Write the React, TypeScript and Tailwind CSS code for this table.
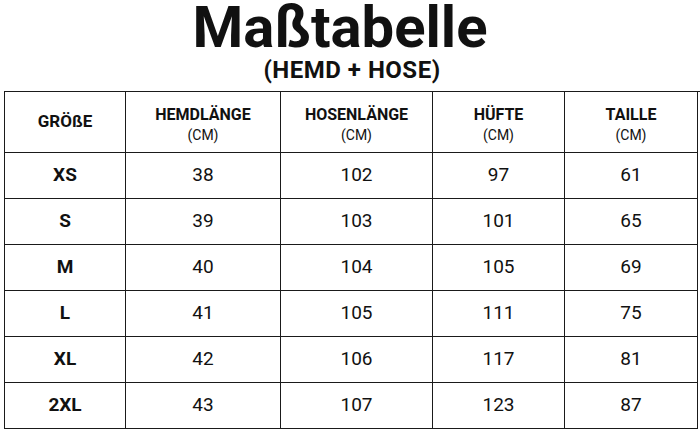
const rows = [
  { size: 'XS', hemd: 38, hose: 102, huefte: 97, taille: 61 },
  { size: 'S', hemd: 39, hose: 103, huefte: 101, taille: 65 },
  { size: 'M', hemd: 40, hose: 104, huefte: 105, taille: 69 },
  { size: 'L', hemd: 41, hose: 105, huefte: 111, taille: 75 },
  { size: 'XL', hemd: 42, hose: 106, huefte: 117, taille: 81 },
  { size: '2XL', hemd: 43, hose: 107, huefte: 123, taille: 87 },
]

const headers = ['HEMDLÄNGE', 'HOSENLÄNGE', 'HÜFTE', 'TAILLE']

export default function App() {
  return (
    <div className="w-[700px] h-[429px] bg-white text-[#111] overflow-hidden font-['Roboto',sans-serif]">
      {/* Title */}
      <div className="h-[91px] flex flex-col items-center">
        <h1 className="text-[58px] font-bold leading-[52px] mt-[1px] pr-[20px]">Maßtabelle</h1>
        <h2 className="text-[24px] font-bold leading-[24px] mt-[5px] pl-[4px] tracking-[0.5px]">(HEMD + HOSE)</h2>
      </div>

      {/* Table */}
      <div className="ml-[4px] grid grid-cols-[121px_155px_152px_132px_133px] border-l-[1.5px] border-t-[1.5px] border-[#1a1a1a]">
        <div className="h-[61px] flex items-center justify-center border-r-[1.5px] border-b-[1.5px] border-[#1a1a1a] font-bold text-[17px]">
          GRÖßE
        </div>
        {headers.map((h) => (
          <div
            key={h}
            className="h-[61px] flex flex-col items-center justify-center pt-[5px] border-r-[1.5px] border-b-[1.5px] border-[#1a1a1a]"
          >
            <span className="font-bold text-[16px] leading-[20px]">{h}</span>
            <span className="text-[14px] leading-[20px]">(CM)</span>
          </div>
        ))}
        {rows.map((r) => (
          <div key={r.size} className="contents">
            <div className="h-[46px] flex items-center justify-center border-r-[1.5px] border-b-[1.5px] border-[#1a1a1a] font-bold text-[19px]">
              {r.size}
            </div>
            {[r.hemd, r.hose, r.huefte, r.taille].map((v, i) => (
              <div
                key={i}
                className="h-[46px] flex items-center justify-center border-r-[1.5px] border-b-[1.5px] border-[#1a1a1a] text-[19px]"
              >
                {v}
              </div>
            ))}
          </div>
        ))}
      </div>
    </div>
  )
}
